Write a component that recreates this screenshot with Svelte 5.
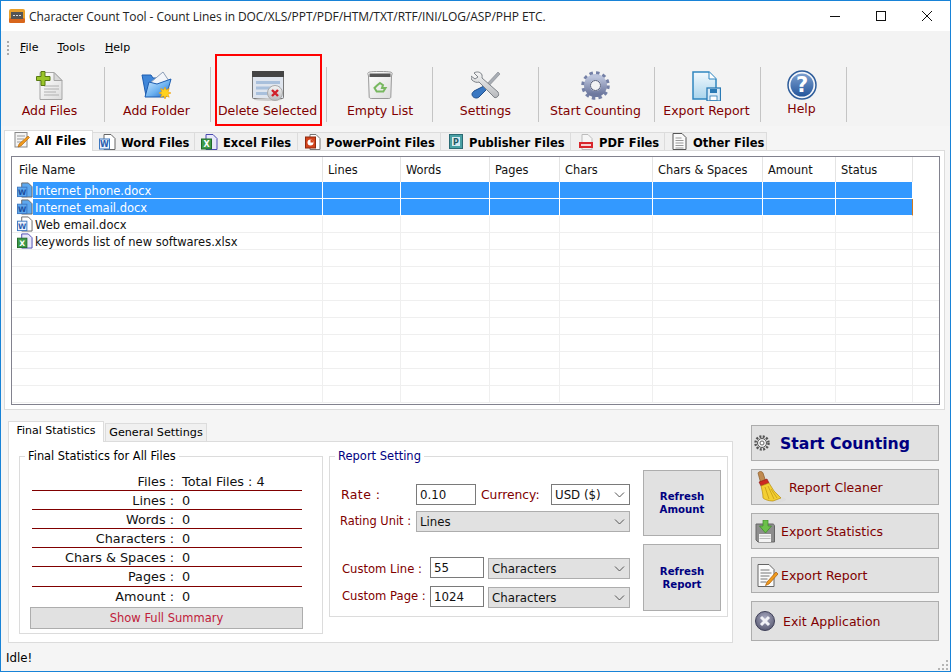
<script lang="ts">
  const tools = [
    { label: 'Add Files', icon: 'addfile', w: 104 },
    { label: 'Add Folder', icon: 'addfolder', w: 106 },
    { label: 'Delete Selected', icon: 'delete', w: 116, marked: true },
    { label: 'Empty List', icon: 'trash', w: 106 },
    { label: 'Settings', icon: 'tools', w: 106 },
    { label: 'Start Counting', icon: 'gear', w: 116 },
    { label: 'Export Report', icon: 'export', w: 106 },
    { label: 'Help', icon: 'help', w: 86, help: true },
  ];

  const tabs = [
    { label: 'All Files', icon: 'note', w: 89, active: true },
    { label: 'Word Files', icon: 'word', w: 102 },
    { label: 'Excel Files', icon: 'excel', w: 103 },
    { label: 'PowerPoint Files', icon: 'ppt', w: 143 },
    { label: 'Publisher Files', icon: 'pub', w: 130 },
    { label: 'PDF Files', icon: 'pdf', w: 94 },
    { label: 'Other Files', icon: 'other', w: 102 },
  ];

  const columns = [
    { label: 'File Name', w: 311 },
    { label: 'Lines', w: 78 },
    { label: 'Words', w: 89 },
    { label: 'Pages', w: 70 },
    { label: 'Chars', w: 93 },
    { label: 'Chars & Spaces', w: 110 },
    { label: 'Amount', w: 73 },
    { label: 'Status', w: 77 },
    { label: '', w: 27 },
  ];

  const files = [
    { name: 'Internet phone.docx', icon: 'word', selected: true },
    { name: 'Internet email.docx', icon: 'word', selected: true, focused: true },
    { name: 'Web email.docx', icon: 'word' },
    { name: 'keywords list of new softwares.xlsx', icon: 'excel' },
  ];
  const rows = [...files, ...Array.from({ length: 9 }, () => null)];

  const stats = [
    ['Files', 'Total Files : 4'],
    ['Lines', '0'],
    ['Words', '0'],
    ['Characters', '0'],
    ['Chars & Spaces', '0'],
    ['Pages', '0'],
    ['Amount', '0'],
  ];

  const sideButtons = [
    { label: 'Start Counting', icon: 'smallgear', cls: 'start' },
    { label: 'Report Cleaner', icon: 'broom', cls: 'cleaner' },
    { label: 'Export Statistics', icon: 'floppy', cls: 'stats' },
    { label: 'Export Report', icon: 'report', cls: 'report' },
    { label: 'Exit Application', icon: 'exit', cls: 'exit' },
  ];
</script>

{#snippet caret()}
  <svg class="caret" width="11" height="6" viewBox="0 0 11 6" fill="none" stroke="#555" stroke-width="1">
    <path d="M1 .5l4.5 4.5L10 .5" />
  </svg>
{/snippet}

{#snippet icon(name)}
  {#if name === 'addfile'}
    <svg width="28" height="30" viewBox="0 0 28 30">
      <path d="M4 1.500h14l8 8v19H4z" fill="url(#paper)" stroke="#a5a5a5" />
      <path d="M18 1.500v8h8z" fill="#d8d8d8" stroke="#a5a5a5" />
      <path d="M8 15h15M8 18h15M8 21h12M8 24h15" stroke="#b0b0b0" />
      <path d="M5 .5h4v5h5v4H9v5H5v-5H.5v-4H5z" fill="#9ac52a" stroke="#587a12" />
    </svg>
  {:else if name === 'addfolder'}
    <svg width="31" height="28" viewBox="0 0 31 28">
      <path d="M1 4h9l2 3h13v18H5z" fill="#3f86d8" stroke="#1c5cb0" />
      <path d="M9 12L22 1l6 9-4 8z" fill="#f2f5fa" stroke="#8d9fb8" />
      <path d="M4 26L8 11l8 2 14-5-5 18z" fill="url(#folder)" stroke="#1c5cb0" />
      <path d="M24 16l1.200 3 3-1.500-1.200 3.200 3 1.300-3 1.200 1.200 3-3-1.200-1.200 3-1.300-3-3 1.200 1.200-3-3-1.200 3-1.300-1.200-3.200 3 1.500z" fill="#ffd21f" stroke="#ee9d0c" stroke-width=".6" />
    </svg>
  {:else if name === 'delete'}
    <svg width="32" height="30" viewBox="0 0 32 30">
      <rect x=".5" y=".5" width="31" height="27" rx="1" fill="#dfe5ee" stroke="#777" />
      <rect x="0" y="0" width="32" height="6" fill="#444" />
      <path d="M4 10h24v3H4zM4 15.500h24v3H4zM4 21h24v3H4z" fill="#a9c0dc" />
      <ellipse cx="16" cy="28.500" rx="14" ry="1.500" fill="#ccc" />
      <circle cx="23" cy="22" r="7.500" fill="url(#silver)" stroke="#aaa" />
      <path d="M20 19l6 6M26 19l-6 6" stroke="#d0202a" stroke-width="2.400" />
    </svg>
  {:else if name === 'trash'}
    <svg width="26" height="28" viewBox="0 0 26 28">
      <path d="M1.500 5L.8 2.500C.8 1 3 .5 13 .5s12.200.5 12.200 2L24.500 5l-.7 21c0 1-1 1.500-2 1.500H4.200c-1 0-2-.5-2-1.500z" fill="url(#paper)" stroke="#999" />
      <rect x="2.500" y="2.500" width="21" height="3.500" fill="#555" />
      <path d="M13 12l3 2.200-1 2.800h3.500l-2.200 3.500h-6.600L7.500 17l2.500-2.500z" fill="none" stroke="#78b860" stroke-width="2" />
    </svg>
  {:else if name === 'tools'}
    <svg width="30" height="28" viewBox="0 0 30 28">
      <path d="M27 1l2 2-13 14-2-2z" fill="#a8adb4" stroke="#7d8288" stroke-width=".6" />
      <path d="M13 15l3 3-8 8c-2 2-7 1-7-3 0-1 1-2 2-3z" fill="#3a78c2" stroke="#1f4f8c" />
      <path d="M3 2c3-2 7-1 8 2 .3 1 0 2 0 3l16 14c1 2 1 4-1 5-1 1-3 1-4-1L8 11C6 12 3 11 1 9c-1-1-1-3-1-4l4 3 3-2-4-4z" fill="url(#silver)" stroke="#7d8288" />
    </svg>
  {:else if name === 'gear'}
    <svg width="29" height="29" viewBox="0 0 29 29">
      <circle cx="14.500" cy="14.500" r="12" fill="none" stroke="#7480a6" stroke-width="4.500" stroke-dasharray="3.300 3" />
      <circle cx="14.500" cy="14.500" r="8.500" fill="none" stroke="url(#steel)" stroke-width="6" />
      <circle cx="14.500" cy="14.500" r="5" fill="#f2f2f4" stroke="#555e7c" />
    </svg>
  {:else if name === 'export'}
    <svg width="29" height="30" viewBox="0 0 29 30">
      <path d="M1 1h16l7 7v20H1z" fill="url(#iceblue)" stroke="#2f86c0" stroke-width="1.500" />
      <path d="M17 1v7h7" fill="#fff" stroke="#2f86c0" />
      <rect x="15" y="17" width="13.500" height="13" fill="#d7eaf7" stroke="#2a7ab5" stroke-width="1.300" />
      <rect x="18" y="18" width="7" height="4" fill="#2a7ab5" />
      <rect x="18" y="25" width="7" height="4.500" fill="#fff" stroke="#2a7ab5" stroke-width=".8" />
    </svg>
  {:else if name === 'help'}
    <svg width="30" height="30" viewBox="0 0 30 30">
      <circle cx="15" cy="15" r="14" fill="#f4f6fa" stroke="#2d5c9a" stroke-width="1.500" />
      <circle cx="15" cy="15" r="11.500" fill="url(#helpblue)" />
      <text x="15" y="22" text-anchor="middle" class="qmark">?</text>
    </svg>
  {:else if name === 'note'}
    <svg width="16" height="16" viewBox="0 0 16 16">
      <rect x="1" y=".5" width="12" height="14.500" fill="#f4f4f4" stroke="#888" />
      <path d="M3 4h8M3 7h7M3 10h5" stroke="#999" />
      <path d="M14 4l1.500 1.500L7 14l-3 1 1-3z" fill="#f09a1c" stroke="#a85c08" stroke-width=".6" />
    </svg>
  {:else if name === 'word'}
    <svg width="17" height="16" viewBox="0 0 17 16">
      <path d="M5 .5h7l4 4v11H5z" class="docfill" stroke="#666" />
      <rect x=".5" y="5" width="10" height="10" class="wordbox" stroke="#3d78c2" />
      <text x="5.500" y="13" text-anchor="middle" class="tinyletter blue">W</text>
    </svg>
  {:else if name === 'excel'}
    <svg width="17" height="16" viewBox="0 0 17 16">
      <path d="M5 .5h7l4 4v11H5z" fill="#e8e8fa" stroke="#4a4ab0" />
      <rect x=".5" y="5" width="10" height="10" fill="#3c9a48" stroke="#1f6a2a" />
      <text x="5.500" y="13" text-anchor="middle" class="tinyletter">X</text>
    </svg>
  {:else if name === 'ppt'}
    <svg width="16" height="16" viewBox="0 0 16 16">
      <path d="M5 .5h6l4 4v11H5z" fill="#fff" stroke="#777" />
      <rect x=".5" y="3" width="10" height="11" fill="#d2431c" stroke="#8e2a0e" />
      <circle cx="5.500" cy="8.500" r="3" fill="#fff" />
      <path d="M5.500 8.500V5.500a3 3 0 0 1 3 3z" fill="#d2431c" />
    </svg>
  {:else if name === 'pub'}
    <svg width="14" height="15" viewBox="0 0 14 15">
      <rect x=".5" y=".5" width="13" height="14" fill="#48a0a4" stroke="#2a6a74" />
      <rect x="3" y="3" width="8" height="9" fill="#d5eaf0" />
      <text x="7" y="11" text-anchor="middle" class="tinyletter dark">P</text>
    </svg>
  {:else if name === 'pdf'}
    <svg width="14" height="16" viewBox="0 0 14 16">
      <path d="M3 .5h6l4 4v11H3z" fill="#f6f6f6" stroke="#bbb" />
      <rect x="0" y="8" width="14" height="6" fill="#d8262c" />
      <rect x="2" y="10" width="10" height="2" fill="#fff" opacity=".8" />
    </svg>
  {:else if name === 'other'}
    <svg width="15" height="17" viewBox="0 0 15 17">
      <path d="M1 .5h9l4 4v12H1z" fill="#fafafa" stroke="#555" />
      <path d="M3.500 5h6M3.500 7.500h8M3.500 10h8M3.500 12.500h8M3.500 15h8" stroke="#999" />
    </svg>
  {:else if name === 'smallgear'}
    <svg width="16" height="16" viewBox="0 0 16 16">
      <circle cx="8" cy="8" r="6.500" fill="none" stroke="#555" stroke-width="2.500" stroke-dasharray="2 1.400" />
      <circle cx="8" cy="8" r="4.500" fill="#eee" stroke="#555" />
      <circle cx="8" cy="8" r="2" fill="#fff" stroke="#666" />
    </svg>
  {:else if name === 'broom'}
    <svg width="30" height="32" viewBox="0 0 30 32">
      <ellipse cx="20" cy="28.500" rx="10" ry="3" fill="#ddd" />
      <path d="M2 2c1-2 4-2 5 0l3 9-5 2z" fill="#c08a50" stroke="#8a5a28" stroke-width=".7" />
      <path d="M3 11l8-3 2 4-8 3z" fill="#cc2a22" stroke="#8c1610" stroke-width=".6" />
      <path d="M5 15l8-3 5 8 7 7-8 3c-5 0-9-2-10-3 0-4-1-8-2-12z" fill="#f3cf34" stroke="#b88e10" stroke-width=".7" />
      <path d="M9 16l4 12M12 15l6 13M15 18l6 9" stroke="#c49c14" stroke-width=".8" />
    </svg>
  {:else if name === 'floppy'}
    <svg width="20" height="23" viewBox="0 0 20 23">
      <path d="M1 4h17c.5 0 1.500 1 1.500 1.500V22H3L1 20z" fill="#8d8d8d" stroke="#666" />
      <rect x="4" y="14" width="12" height="8" fill="#f4f4f4" />
      <path d="M4.500 16h11M4.500 18.500h11" stroke="#bbb" />
      <path d="M8 0h5v6h3.500L10.500 13 4.500 6H8z" fill="#6cc04a" stroke="#3a8a26" stroke-width=".7" />
    </svg>
  {:else if name === 'report'}
    <svg width="21" height="23" viewBox="0 0 21 23">
      <path d="M1 .5h11l5 5v17H1z" fill="#fbfbfb" stroke="#666" />
      <path d="M3.500 6h9M3.500 9h11M3.500 12h9M3.500 15h7M3.500 18h6" stroke="#777" />
      <path d="M19 8l2 2-9 10-3.500 1.500L10 18z" fill="#f09a1c" stroke="#a85c08" stroke-width=".7" />
    </svg>
  {:else if name === 'exit'}
    <svg width="20" height="20" viewBox="0 0 20 20">
      <circle cx="10" cy="10" r="9.500" fill="url(#exitgrey)" stroke="#3f4058" />
      <path d="M6 6l8 8M14 6l-8 8" stroke="#f2f2f6" stroke-width="3" />
    </svg>
  {/if}
{/snippet}

<svg class="defs" width="0" height="0" aria-hidden="true">
  <defs>
    <linearGradient id="paper" x1="0" y1="0" x2="1" y2="1"><stop offset="0" stop-color="#fff" /><stop offset="1" stop-color="#dcdcdc" /></linearGradient>
    <linearGradient id="folder" x1="0" y1="0" x2="1" y2="1"><stop offset="0" stop-color="#d6ecff" /><stop offset=".55" stop-color="#6db2f0" /><stop offset="1" stop-color="#1a5fc0" /></linearGradient>
    <linearGradient id="silver" x1="0" y1="0" x2="0" y2="1"><stop offset="0" stop-color="#f6f6f6" /><stop offset="1" stop-color="#b6b8bc" /></linearGradient>
    <linearGradient id="steel" x1="0" y1="0" x2="0" y2="1"><stop offset="0" stop-color="#bcc4dc" /><stop offset="1" stop-color="#6d789e" /></linearGradient>
    <linearGradient id="iceblue" x1="0" y1="0" x2="0" y2="1"><stop offset="0" stop-color="#f2f9fd" /><stop offset="1" stop-color="#a9d4ec" /></linearGradient>
    <linearGradient id="helpblue" x1="0" y1="0" x2="0" y2="1"><stop offset="0" stop-color="#7c9fcf" /><stop offset="1" stop-color="#25569c" /></linearGradient>
    <radialGradient id="exitgrey" cx=".5" cy=".35" r=".7"><stop offset="0" stop-color="#a8a9c0" /><stop offset="1" stop-color="#55566e" /></radialGradient>
  </defs>
</svg>

<div class="window">
  <header class="titlebar">
    <svg class="appicon" width="16" height="14" viewBox="0 0 16 14">
      <rect width="16" height="14" rx="2" fill="#e8a02c" />
      <rect y="9" width="16" height="5" rx="1.500" fill="#d8661c" />
      <rect x="2" y="3" width="12" height="7" fill="#555" />
      <path d="M4 6.500h8" stroke="#ddd" stroke-dasharray="2 1" />
    </svg>
    <span class="title">Character Count Tool - Count Lines in DOC/XLS/PPT/PDF/HTM/TXT/RTF/INI/LOG/ASP/PHP ETC.</span>
    <div class="winbtns">
      <svg width="12" height="12" viewBox="0 0 12 12"><path d="M1 6.500h10" stroke="#111" /></svg>
      <svg width="12" height="12" viewBox="0 0 12 12"><rect x="1.500" y="1.500" width="9" height="9" fill="none" stroke="#111" /></svg>
      <svg width="12" height="12" viewBox="0 0 12 12"><path d="M1 1l10 10M11 1L1 11" stroke="#111" /></svg>
    </div>
  </header>

  <nav class="menubar">
    <span class="grip"></span>
    <span class="menu file"><u>F</u>ile</span>
    <span class="menu tools"><u>T</u>ools</span>
    <span class="menu"><u>H</u>elp</span>
  </nav>

  <div class="toolbar">
    {#each tools as t}
      <button class="tool" class:marked={t.marked} class:help={t.help} style="width:{t.w}px">
        <span class="toolicon">{@render icon(t.icon)}</span>
        <span class="toollabel">{t.label}</span>
      </button>
    {/each}
  </div>

  <div class="tabs">
    {#each tabs as t}
      <div class="tab" class:active={t.active} style="width:{t.w}px">
        <span class="tabicon">{@render icon(t.icon)}</span>
        <span class="tabtext">{t.label}</span>
      </div>
    {/each}
  </div>

  <section class="listpanel">
    <div class="listbox">
      <table>
        <colgroup>
          {#each columns as c}<col style="width:{c.w}px" />{/each}
        </colgroup>
        <thead>
          <tr>{#each columns as c}<th>{c.label}</th>{/each}</tr>
        </thead>
        <tbody>
          {#each rows as row}
            <tr class:sel={row?.selected} class:focused={row?.focused}>
              <td class="namecell">
                {#if row}
                  <div class="filename">
                    <span class="fileicon">{@render icon(row.icon)}</span>
                    <span class="fname">{row.name}</span>
                  </div>
                {/if}
              </td>
              {#each columns.slice(1) as c}<td></td>{/each}
            </tr>
          {/each}
        </tbody>
      </table>
    </div>
  </section>

  <div class="lower">
    <div class="lowerleft">
      <div class="subtabs">
        <div class="subtab active">Final Statistics</div>
        <div class="subtab second">General Settings</div>
      </div>
      <div class="subpanel">
        <fieldset class="statsgroup">
          <legend>Final Statistics for All Files</legend>
          {#each stats as [k, v]}
            <div class="statrow">
              <span class="statkey">{k} :</span>
              <span>{v}</span>
            </div>
          {/each}
          <button class="summary">Show Full Summary</button>
        </fieldset>

        <fieldset class="reportgroup">
          <legend>Report Setting</legend>
          <div class="reportform">
            <div class="formrow rate">
              <label class="lbl ratelbl" for="rate">Rate :</label>
              <input id="rate" class="rateinput" value="0.10" />
              <span class="lbl currency">Currency:</span>
              <div class="selwrap curr">
                <select class="white"><option>USD ($)</option></select>
                {@render caret()}
              </div>
            </div>
            <div class="formrow unit">
              <span class="lbl unitlbl">Rating Unit :</span>
              <div class="selwrap wide">
                <select><option>Lines</option></select>
                {@render caret()}
              </div>
            </div>
            <div class="formrow custline">
              <span class="lbl customlbl lineup">Custom Line :</span>
              <input class="custominput" value="55" />
              <div class="selwrap chars">
                <select><option>Characters</option></select>
                {@render caret()}
              </div>
            </div>
            <div class="formrow custpage">
              <span class="lbl customlbl">Custom Page :</span>
              <input class="custominput" value="1024" />
              <div class="selwrap chars">
                <select><option>Characters</option></select>
                {@render caret()}
              </div>
            </div>
          </div>
          <div class="refreshcol">
            <button class="refresh">Refresh<br />Amount</button>
            <button class="refresh tall">Refresh<br />Report</button>
          </div>
        </fieldset>
      </div>
    </div>

    <div class="side">
      {#each sideButtons as b}
        <button class="sidebtn {b.cls}">
          {@render icon(b.icon)}
          <span>{b.label}</span>
        </button>
      {/each}
    </div>
  </div>

  <footer class="status">Idle!</footer>
  <svg class="sizegrip" width="11" height="11" viewBox="0 0 11 11" fill="#b5b5b5">
    <rect x="8" y="0" width="2" height="2" /><rect x="4" y="4" width="2" height="2" /><rect x="8" y="4" width="2" height="2" />
    <rect x="0" y="8" width="2" height="2" /><rect x="4" y="8" width="2" height="2" /><rect x="8" y="8" width="2" height="2" />
  </svg>
</div>

<style>
  :global(body) { margin: 0; background: #f5f5f5; }

  .defs { display: block; }

  .window {
    position: relative;
    width: 951px; height: 672px; box-sizing: border-box;
    display: flex; flex-direction: column;
    background: #f5f5f5;
    border: 1px solid #1883d7;
    font-family: "DejaVu Sans", Verdana, sans-serif;
    font-size: 12px; color: #000;
    overflow: hidden;
  }

  button { font-family: inherit; cursor: default; }

  /* Title bar */
  .titlebar {
    display: flex; align-items: center;
    height: 30px; flex-shrink: 0;
    background: #fff;
    padding-left: 8px;
  }
  .appicon { margin-right: 4px; }
  .title {
    font-family: "Open Sans", "Noto Sans", sans-serif;
    font-size: 12px; color: #222; letter-spacing: -0.07px;
    white-space: nowrap;
  }
  .winbtns {
    margin-left: auto; display: flex; gap: 34px; padding-right: 17px;
  }

  /* Menu */
  .menubar {
    display: flex; align-items: center;
    height: 31px; flex-shrink: 0;
    background: #f3f3f3;
    font-size: 11px; padding-top: 2px; box-sizing: border-box;
  }
  .grip {
    width: 2px; height: 14px; margin: 0 11px 0 6px;
    background: repeating-linear-gradient(#aaa 0 2px, transparent 2px 4px);
  }
  .menu.file { margin-right: 19px; }
  .menu.tools { margin-right: 20px; letter-spacing: .1px; }

  /* Toolbar */
  .toolbar {
    display: flex; flex-shrink: 0;
    height: 64px; box-sizing: border-box;
    padding-top: 5px;
    background: #f3f3f3;
  }
  .tool {
    position: relative;
    height: 55px; padding: 0 2px 0 0;
    display: flex; flex-direction: column; align-items: center;
    background: none; border: none;
    border-right: 1px solid #c4c4c4;
    color: #800000;
    box-sizing: border-box;
  }
  .tool:first-child { padding-right: 6px; }
  .tool:nth-child(4) { padding: 0 0 0 1px; }
  .tool:nth-child(5) { padding: 0; }
  .toolicon { height: 32px; margin-top: 4px; display: flex; align-items: flex-start; }
  .toollabel { font-size: 12.5px; line-height: 16px; white-space: nowrap; }
  .tool.help { padding-right: 4px; }
  .tool.help .toolicon { margin-top: 3px; }
  .tool.help .toollabel { margin-top: -1px; }
  .tool.marked::after {
    content: ""; position: absolute;
    left: 4px; top: -13px;
    width: 107px; height: 72px; box-sizing: border-box;
    border: 2px solid #f00;
  }

  /* File tabs */
  .tabs {
    display: flex; align-items: flex-end;
    height: 19px; margin: 5px 0 0 3px; flex-shrink: 0;
    font-weight: 700; font-size: 11.5px;
    position: relative; z-index: 1;
  }
  .tab {
    display: flex; align-items: center; gap: 5px;
    height: 18px; box-sizing: border-box;
    padding-left: 6px;
    background: #f0f0f0;
    border: 1px solid #dcdcdc; border-left: none; border-bottom: none;
    white-space: nowrap;
  }
  .tabtext { padding-top: 2px; }
  .tab.active {
    height: 21px; margin-bottom: -1px;
    padding-left: 8px;
    background: #fff;
    border-left: 1px solid #dcdcdc;
  }
  .tab.active .tabicon { margin-top: -3px; }
  .tab.active .tabtext { margin-top: -3px; }
  .tabicon { width: 17px; display: flex; justify-content: center; flex-shrink: 0; }

  .qmark { font: 700 21px "DejaVu Sans", sans-serif; fill: #fff; }
  .tinyletter { font: 700 8px "DejaVu Sans", sans-serif; fill: #fff; }
  .tinyletter.dark { fill: #1f5a66; }
  .tinyletter.blue { fill: #2a5fb0; }
  .docfill { fill: #fff; }
  .wordbox { fill: #eef3fb; }

  /* File list */
  .listpanel {
    width: 941px; height: 260px; box-sizing: border-box;
    margin-left: 3px; padding: 5px 5px 4px 6px;
    background: #fff;
    border: 1px solid #dcdcdc;
    flex-shrink: 0;
  }
  .listbox {
    width: 929px; height: 249px; box-sizing: border-box;
    border: 1px solid #82828e;
    overflow: hidden;
  }
  table {
    table-layout: fixed; border-collapse: separate; border-spacing: 0;
    width: 928px;
    font-size: 11.4px;
  }
  th {
    height: 25px; padding: 1px 0 0 5px;
    text-align: left; font-weight: 400; color: #111;
    border-right: 1px solid #e4e4e4;
    box-sizing: border-box;
  }
  th:first-child { padding-left: 7px; }
  th:last-child, td:last-child { border-right: none; }
  td {
    height: 17px; padding: 0;
    border-right: 1px solid #efefef;
    border-bottom: 1px solid #efefef;
    box-sizing: border-box;
  }
  tr.sel td { background: #3399ff; border-right-color: #fff; border-bottom-color: #fff; }
  tr.sel td:last-child { background: none; }
  tr.focused td:nth-last-child(2) { border-right: 1px solid #d07a20; }
  tr.sel td.namecell { background: none; }
  .filename { display: flex; height: 16px; align-items: stretch; padding-left: 5px; font-size: 11.5px; }
  .fileicon { width: 16px; flex-shrink: 0; display: flex; }
  .fname { flex: 1; padding-left: 2px; line-height: 18px; white-space: nowrap; color: #111; overflow: hidden; }
  tr.sel .fname { background: #3399ff; color: #fff; }
  tr.sel .docfill, tr.sel .wordbox { fill: #5ea8ee; }
  tr.sel .tinyletter.blue { fill: #1d4f9e; }

  /* Lower area */
  .lower { display: flex; flex-shrink: 0; margin-top: 10px; padding-left: 7px; }
  .lowerleft { width: 725px; }
  .subtabs { display: flex; align-items: flex-end; height: 21px; gap: 1px; position: relative; z-index: 1; }
  .subtab {
    height: 18px; box-sizing: border-box;
    background: #f0f0f0; border: 1px solid #dcdcdc; border-bottom: none;
    text-align: center; line-height: 18px;
    font-size: 11.2px; white-space: nowrap;
  }
  .subtab.active { width: 96px; height: 21px; margin-bottom: -1px; background: #fff; line-height: 17px; font-size: 11px; }
  .subtab.second { width: 102px; }
  .subpanel {
    display: flex; gap: 6px; align-items: flex-start;
    height: 202px; box-sizing: border-box;
    padding: 7px 0 0 10px;
    background: #fff; border: 1px solid #dcdcdc;
  }

  fieldset {
    margin: 0; min-width: 0; box-sizing: border-box;
    border: 1px solid #dcdcdc;
  }
  legend { padding: 0 3px; margin-left: 5px; font-size: 11.4px; line-height: 15px; }

  .statsgroup { width: 304px; height: 185px; padding: 8px 0 0 0; }
  .statrow {
    display: grid; grid-template-columns: 142px 1fr; column-gap: 8px;
    margin: 0 20px 0 12px;
    height: 19px; box-sizing: border-box;
    line-height: 19px; font-size: 12.8px;
    border-bottom: 1px solid #800000;
    color: #111;
  }
  .statrow:last-of-type { border-bottom: none; }
  .statrow:nth-last-of-type(2) { height: 20px; line-height: 20px; }
  .statkey { text-align: right; }
  .summary {
    display: block; width: 273px; height: 22px; margin: 1px 0 0 10px;
    background: #e1e1e1; border: 1.5px solid #adadad; padding: 0;
    color: #c0203a; font-size: 11.5px;
  }

  .reportgroup {
    width: 399px; height: 168px;
    display: flex; padding: 0;
  }
  .reportgroup legend { color: #000080; font-size: 11.5px; }
  .reportform { width: 313px; padding: 20px 0 0 10px; box-sizing: border-box; }
  .formrow { display: flex; align-items: center; height: 21px; }
  .formrow.unit { margin-top: 6px; }
  .formrow.custline { margin-top: 25px; }
  .formrow.custpage { margin-top: 8px; }
  .lbl { color: #800000; white-space: nowrap; }
  .ratelbl { width: 76px; padding-left: 1px; box-sizing: border-box; font-size: 12.5px; letter-spacing: .4px; }
  .unitlbl { width: 76px; font-size: 11.4px; margin-top: -2px; }
  .customlbl { width: 90px; padding-left: 2px; box-sizing: border-box; font-size: 11.6px; margin-top: -2px; }
  .customlbl.lineup { margin-top: 2px; }
  .currency { width: 75px; padding-left: 5px; box-sizing: border-box; font-size: 12.3px; }

  input {
    height: 21px; box-sizing: border-box; padding: 0 3px;
    border: 1px solid #7a7a7a; background: #fff; border-radius: 0;
    font: 11.8px "DejaVu Sans", sans-serif; color: #111;
    outline: none;
  }
  .rateinput { width: 60px; }
  .custominput { width: 54px; }

  .selwrap { position: relative; height: 21px; }
  .selwrap.curr { width: 79px; }
  .selwrap.wide { width: 214px; }
  .selwrap.chars { width: 142px; margin-left: 4px; margin-top: 2px; }
  select {
    appearance: none; -webkit-appearance: none;
    width: 100%; height: 100%; padding: 0 3px; box-sizing: border-box;
    background: #e1e1e1; border: 1px solid #adadad; border-radius: 0;
    font: 11.8px "DejaVu Sans", sans-serif; color: #111;
  }
  select.white { background: #fff; border-color: #7a7a7a; }
  .caret { position: absolute; right: 5px; top: 8px; }

  .refreshcol {
    padding: 6px 0 0 0; display: flex; flex-direction: column; gap: 8px;
  }
  .refresh {
    width: 78px; height: 66px; padding: 0;
    background: #e1e1e1; border: 1px solid #adadad;
    color: #000080; font-weight: 700; font-size: 10.2px; line-height: 13px;
  }
  .refresh.tall { height: 67px; }

  /* Side buttons */
  .side {
    width: 188px; margin: 5px 0 0 18px;
    display: flex; flex-direction: column; gap: 8px;
  }
  .sidebtn {
    display: flex; align-items: center;
    height: 36px; padding: 0;
    background: #e1e1e1; border: 1px solid #adadad;
    color: #800000; font-size: 12.5px;
  }
  .sidebtn.start { padding-left: 2px; gap: 10px; color: #000080; font-weight: 700; font-size: 15.7px; }
  .sidebtn.cleaner { padding-left: 4px; gap: 3px; }
  .sidebtn.stats { padding-left: 3px; gap: 6px; }
  .sidebtn.report { padding-left: 5px; gap: 3px; }
  .sidebtn.exit { padding-left: 3px; gap: 8px; height: 40px; }

  .status {
    margin-top: auto; height: 26px; line-height: 27px;
    padding-left: 5px; font-size: 11.8px;
  }
  .sizegrip { position: absolute; right: 1px; bottom: 0; }
</style>
